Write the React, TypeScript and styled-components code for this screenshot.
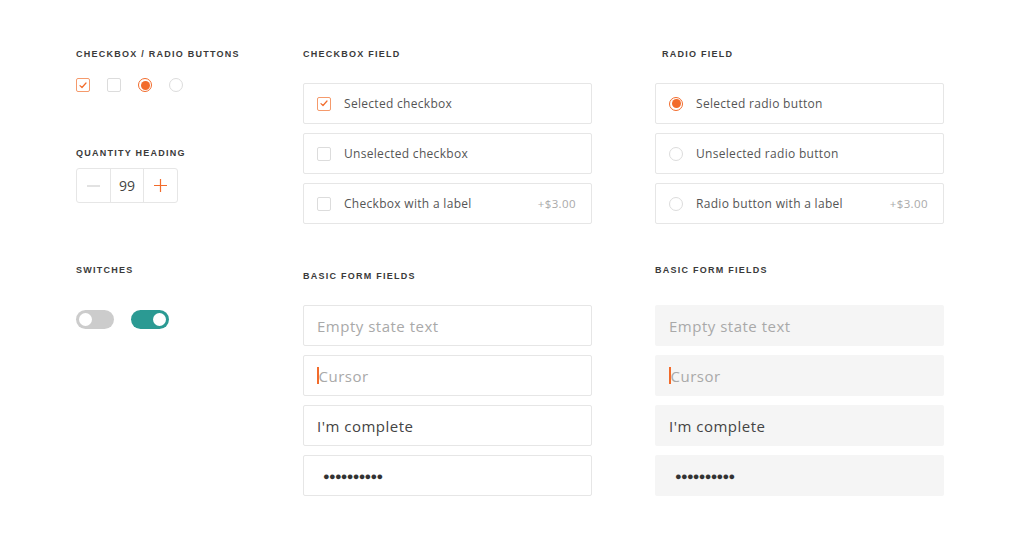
import styled, { createGlobalStyle } from 'styled-components';

const ORANGE = '#f26b2b';
const TEAL = '#2b9a93';
const BORDER = '#e6e6e6';
const TEXT = '#555555';
const MUTED = '#a9a9a9';

const GlobalStyle = createGlobalStyle`
  html, body {
    margin: 0;
    padding: 0;
    background: #ffffff;
  }
  body {
    font-family: "Open Sans", "Noto Sans", sans-serif;
    color: ${TEXT};
  }
`;

const Page = styled.div`
  width: 1024px;
  height: 555px;
  box-sizing: border-box;
  padding: 48px 0 0 76px;
  display: grid;
  grid-template-columns: 164px 289px 289px;
  column-gap: 63px;
  align-items: start;
`;

const Column = styled.div`
  display: flex;
  flex-direction: column;
`;

const Heading = styled.div<{ $top?: number; $bottom: number; $indent?: number }>`
  font-family: "Liberation Sans", Arial, sans-serif;
  font-weight: 700;
  font-size: 9px;
  line-height: 12px;
  letter-spacing: 1.25px;
  color: #3a3a3a;
  white-space: nowrap;
  margin-top: ${(p) => p.$top ?? 0}px;
  margin-bottom: ${(p) => p.$bottom}px;
  padding-left: ${(p) => p.$indent ?? 0}px;
`;

const IconRow = styled.div`
  display: flex;
  align-items: center;
  gap: 17px;
  height: 14px;
`;

const Box = styled.span<{ $checked?: boolean }>`
  width: 14px;
  height: 14px;
  box-sizing: border-box;
  border-radius: 2px;
  border: 1px solid ${(p) => (p.$checked ? '#f59a6c' : '#dcdcdc')};
  display: flex;
  align-items: center;
  justify-content: center;
  flex-shrink: 0;
`;

const Radio = styled.span<{ $checked?: boolean }>`
  width: 14px;
  height: 14px;
  box-sizing: border-box;
  border-radius: 50%;
  border: 1px solid ${(p) => (p.$checked ? ORANGE : '#dcdcdc')};
  display: flex;
  align-items: center;
  justify-content: center;
  flex-shrink: 0;

  &::after {
    content: '';
    display: ${(p) => (p.$checked ? 'block' : 'none')};
    width: 9px;
    height: 9px;
    border-radius: 50%;
    background: ${ORANGE};
  }
`;

const Checkbox = ({ checked }: { checked?: boolean }) => (
  <Box $checked={checked}>
    {checked && (
      <svg width="8" height="7" viewBox="0 0 8 7">
        <path d="M1 3.6 L3 5.5 L7 1" fill="none" stroke={ORANGE} strokeWidth="1.2" strokeLinecap="round" strokeLinejoin="round" />
      </svg>
    )}
  </Box>
);

const Quantity = styled.div`
  display: flex;
  width: 102px;
  height: 35px;
  box-sizing: border-box;
  border: 1px solid ${BORDER};
  border-radius: 3px;
`;

const QtyCell = styled.div<{ $divider?: boolean }>`
  flex: 1;
  display: flex;
  align-items: center;
  justify-content: center;
  font-size: 14px;
  color: #444;
  border-left: ${(p) => (p.$divider ? `1px solid ${BORDER}` : 'none')};
`;

const SwitchRow = styled.div`
  display: flex;
  gap: 17px;
`;

const Switch = styled.span<{ $on?: boolean }>`
  width: 38px;
  height: 19px;
  box-sizing: border-box;
  padding: 3px;
  border-radius: 10px;
  background: ${(p) => (p.$on ? TEAL : '#cccccc')};
  display: flex;
  justify-content: ${(p) => (p.$on ? 'flex-end' : 'flex-start')};

  &::after {
    content: '';
    width: 13px;
    height: 13px;
    border-radius: 50%;
    background: #fff;
  }
`;

const FieldList = styled.div`
  display: flex;
  flex-direction: column;
  gap: 9px;
`;

const OptionField = styled.div<{ $indent: number }>`
  height: 41px;
  box-sizing: border-box;
  border: 1px solid ${BORDER};
  border-radius: 2px;
  display: flex;
  align-items: center;
  gap: 13px;
  padding: 0 15px 0 ${(p) => p.$indent}px;
  font-size: 12px;
  letter-spacing: 0.3px;
  color: ${TEXT};
`;

const OptionLabel = styled.span`
  flex: 1;
`;

const Price = styled.span`
  color: ${MUTED};
  font-size: 11.5px;
  letter-spacing: 0.4px;
`;

const Input = styled.div<{ $filled?: boolean }>`
  height: 41px;
  box-sizing: border-box;
  border: 1px solid ${(p) => (p.$filled ? 'transparent' : BORDER)};
  background: ${(p) => (p.$filled ? '#f5f5f5' : '#fff')};
  border-radius: 2px;
  display: flex;
  align-items: center;
  padding-left: 13px;
  font-size: 15px;
  letter-spacing: 0.5px;
`;

const Placeholder = styled.span`
  color: ${MUTED};
`;

const Value = styled.span`
  color: #444;
`;

const Caret = styled.span`
  width: 1.5px;
  height: 17px;
  background: ${ORANGE};
`;

const Dots = styled.span`
  color: #333;
  font-size: 11px;
  letter-spacing: -0.7px;
  padding-left: 6px;
`;

const Fields = ({ filled }: { filled?: boolean }) => (
  <FieldList>
    <Input $filled={filled}>
      <Placeholder>Empty state text</Placeholder>
    </Input>
    <Input $filled={filled}>
      <Caret />
      <Placeholder>Cursor</Placeholder>
    </Input>
    <Input $filled={filled}>
      <Value>I'm complete</Value>
    </Input>
    <Input $filled={filled}>
      <Dots>●●●●●●●●●●</Dots>
    </Input>
  </FieldList>
);

export default function App() {
  return (
    <>
      <GlobalStyle />
      <Page>
        <Column>
          <Heading $bottom={18}>CHECKBOX / RADIO BUTTONS</Heading>
          <IconRow>
            <Checkbox checked />
            <Checkbox />
            <Radio $checked />
            <Radio />
          </IconRow>
          <Heading $top={55} $bottom={9}>QUANTITY HEADING</Heading>
          <Quantity>
            <QtyCell>
              <svg width="13" height="2" viewBox="0 0 13 2">
                <path d="M0 1 H13" stroke="#cfcfcf" strokeWidth="1.2" />
              </svg>
            </QtyCell>
            <QtyCell $divider>99</QtyCell>
            <QtyCell $divider>
              <svg width="13" height="13" viewBox="0 0 13 13">
                <path d="M0 6.5 H13 M6.5 0 V13" stroke={ORANGE} strokeWidth="1.2" />
              </svg>
            </QtyCell>
          </Quantity>
          <Heading $top={61} $bottom={34}>SWITCHES</Heading>
          <SwitchRow>
            <Switch />
            <Switch $on />
          </SwitchRow>
        </Column>

        <Column>
          <Heading $bottom={23}>CHECKBOX FIELD</Heading>
          <FieldList>
            <OptionField $indent={13}>
              <Checkbox checked />
              <OptionLabel>Selected checkbox</OptionLabel>
            </OptionField>
            <OptionField $indent={13}>
              <Checkbox />
              <OptionLabel>Unselected checkbox</OptionLabel>
            </OptionField>
            <OptionField $indent={13}>
              <Checkbox />
              <OptionLabel>Checkbox with a label</OptionLabel>
              <Price>+$3.00</Price>
            </OptionField>
          </FieldList>
          <Heading $top={46} $bottom={23}>BASIC FORM FIELDS</Heading>
          <Fields />
        </Column>

        <Column>
          <Heading $bottom={23} $indent={7}>RADIO FIELD</Heading>
          <FieldList>
            <OptionField $indent={13}>
              <Radio $checked />
              <OptionLabel>Selected radio button</OptionLabel>
            </OptionField>
            <OptionField $indent={13}>
              <Radio />
              <OptionLabel>Unselected radio button</OptionLabel>
            </OptionField>
            <OptionField $indent={13}>
              <Radio />
              <OptionLabel>Radio button with a label</OptionLabel>
              <Price>+$3.00</Price>
            </OptionField>
          </FieldList>
          <Heading $top={40} $bottom={29}>BASIC FORM FIELDS</Heading>
          <Fields filled />
        </Column>
      </Page>
    </>
  );
}
